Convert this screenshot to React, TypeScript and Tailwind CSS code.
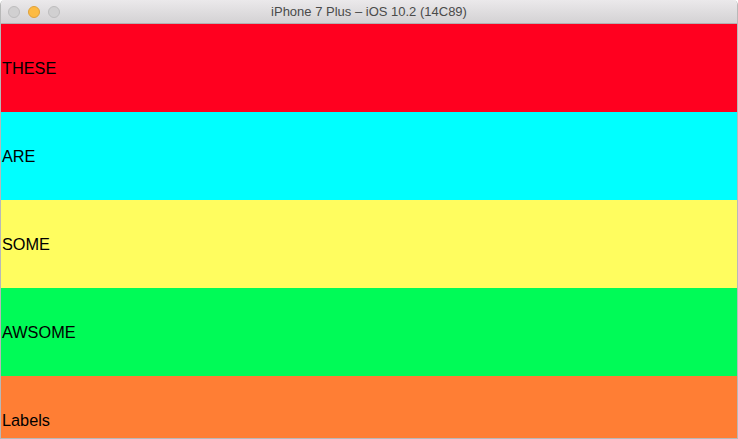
import React from 'react';

const rows = [
  { label: 'THESE', color: 'bg-[#ff001f]' },
  { label: 'ARE', color: 'bg-[#00ffff]' },
  { label: 'SOME', color: 'bg-[#fffd5f]' },
  { label: 'AWSOME', color: 'bg-[#00fb57]' },
  { label: 'Labels', color: 'bg-[#ff7e34]' },
];

export default function App() {
  return (
    <div className="w-[738px] h-[439px] bg-white overflow-hidden">
      <div className="w-full h-full flex flex-col rounded-t-[5px] overflow-hidden border-x border-b border-[#b8b8b8] font-['Liberation_Sans',Arial,sans-serif]">
        {/* Title bar */}
        <div className="relative h-[24px] shrink-0 flex items-center justify-center bg-gradient-to-b from-[#ebe9eb] to-[#d4d2d4] border-b border-[#b2b0b2]">
          <div className="absolute left-[7px] top-[6px] flex gap-[8px]">
            <div className="w-[12px] h-[12px] rounded-full bg-[#d1d0d1] border border-[#bebdbe]" />
            <div className="w-[12px] h-[12px] rounded-full bg-[#fdbb43] border border-[#e0a13a]" />
            <div className="w-[12px] h-[12px] rounded-full bg-[#d1d0d1] border border-[#bebdbe]" />
          </div>
          <span className="text-[13px] text-[#4a4a4a] leading-none">iPhone 7 Plus – iOS 10.2 (14C89)</span>
        </div>
        {/* Labels */}
        <div className="flex-1 flex flex-col overflow-hidden">
          {rows.map((r) => (
            <div key={r.label} className={`h-[88px] shrink-0 flex items-center pl-[1px] ${r.color}`}>
              <span className="text-[16.3px] text-black leading-none">{r.label}</span>
            </div>
          ))}
        </div>
      </div>
    </div>
  );
}
